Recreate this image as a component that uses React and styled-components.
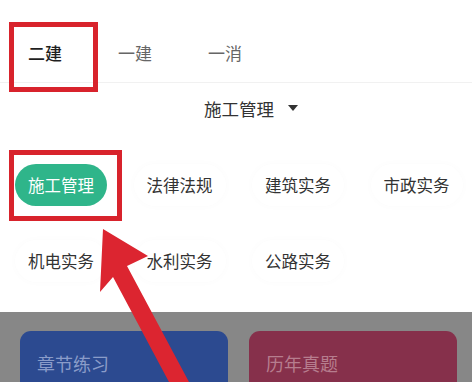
import styled, { createGlobalStyle } from "styled-components";

const GlobalStyle = createGlobalStyle`
  html, body {
    margin: 0;
    padding: 0;
    background: #ffffff;
    font-family: "Noto Sans CJK SC", "Noto Sans", sans-serif;
  }
  * { box-sizing: border-box; }
`;

const Page = styled.div`
  position: relative;
  width: 472px;
  height: 382px;
  overflow: hidden;
  background: #ffffff;
`;

const TabBar = styled.nav`
  display: flex;
  padding-top: 22px;
  border-bottom: 1px solid #f1f1f1;
`;

const Tab = styled.div`
  position: relative;
  width: 90px;
  height: 60px;
  display: flex;
  align-items: center;
  justify-content: center;
  font-size: 17px;
  font-weight: ${(p) => (p.$active ? 500 : 400)};
  color: ${(p) => (p.$active ? "#1f1f1f" : "#666666")};

  ${(p) =>
    p.$marked &&
    `
    &::after {
      content: "";
      position: absolute;
      left: 9px;
      top: 0;
      width: 79px;
      height: 60px;
      border: 5px solid #d8232c;
    }
  `}
`;

const Picker = styled.div`
  display: flex;
  align-items: center;
  justify-content: center;
  gap: 14px;
  height: 50px;
  padding-left: 30px;
  font-size: 17.5px;
  color: #333333;
`;

const Caret = styled.span`
  width: 0;
  height: 0;
  border-left: 5px solid transparent;
  border-right: 5px solid transparent;
  border-top: 6px solid #333333;
`;

const ChipGrid = styled.div`
  display: grid;
  grid-template-columns: repeat(4, 92px);
  column-gap: 26.5px;
  row-gap: 34px;
  padding: 31px 0 0 15px;
`;

const Chip = styled.div`
  position: relative;
  height: 42px;
  border-radius: 21px;
  display: flex;
  align-items: center;
  justify-content: center;
  font-size: 16.5px;
  color: ${(p) => (p.$active ? "#ffffff" : "#333333")};
  background: ${(p) => (p.$active ? "#2fb58a" : "#ffffff")};
  box-shadow: ${(p) =>
    p.$active ? "none" : "0 0 8px rgba(0, 0, 0, 0.02)"};

  ${(p) =>
    p.$marked &&
    `
    &::after {
      content: "";
      position: absolute;
      left: -6px;
      top: -14px;
      right: -15px;
      bottom: -15px;
      border: 5px solid #d8232c;
    }
  `}
`;

const Overlay = styled.section`
  margin-top: 30px;
  height: 120px;
  background: #878787;
  display: grid;
  grid-template-columns: 208px 208px;
  column-gap: 21px;
  padding: 19px 0 0 20px;
`;

const Card = styled.div`
  border-radius: 11px 11px 0 0;
  background: ${(p) => p.$bg};
  color: ${(p) => p.$fg};
  font-size: 18px;
  padding: 19px 0 0 17px;
`;

const Arrow = styled.svg`
  position: absolute;
  left: 0;
  top: 0;
  pointer-events: none;
`;

const subjects = [
  "施工管理",
  "法律法规",
  "建筑实务",
  "市政实务",
  "机电实务",
  "水利实务",
  "公路实务",
];

export default function App() {
  return (
    <Page>
      <GlobalStyle />
      <TabBar>
        <Tab $active $marked>二建</Tab>
        <Tab>一建</Tab>
        <Tab>一消</Tab>
      </TabBar>
      <Picker>
        施工管理
        <Caret />
      </Picker>
      <ChipGrid>
        {subjects.map((s, i) => (
          <Chip key={s} $active={i === 0} $marked={i === 0}>
            {s}
          </Chip>
        ))}
      </ChipGrid>
      <Overlay>
        <Card $bg="#2c4a90" $fg="#8a9cc9">章节练习</Card>
        <Card $bg="#86304b" $fg="#b67d8e">历年真题</Card>
      </Overlay>
      <Arrow width="472" height="382" viewBox="0 0 472 382">
        <polygon
          points="103,229 148,256 127,266 189,382 169,382 113,277 100,292"
          fill="#dc2530"
        />
      </Arrow>
    </Page>
  );
}
